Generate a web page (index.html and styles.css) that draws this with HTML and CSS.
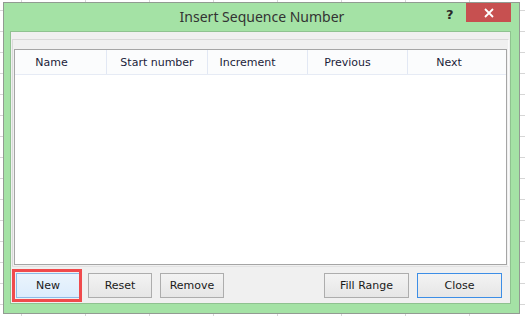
FILE: index.html
```html
<!DOCTYPE html>
<html lang="en">
<head>
  <meta charset="UTF-8">
  <title>Insert Sequence Number</title>
  <link rel="stylesheet" href="styles.css">
</head>
<body>
  <div class="window">
    <div class="titlebar">
      <div class="title">Insert Sequence Number</div>
      <div class="help">?</div>
      <div class="close-x">
        <svg width="10" height="10" viewBox="0 0 10 10">
          <path d="M1 1 L9 9 M9 1 L1 9" stroke="#fff" stroke-width="1.8" fill="none"/>
        </svg>
      </div>
    </div>

    <div class="client">
      <div class="panel">
        <div class="listbox">
          <div class="header">
            <div class="col c1">Name</div>
            <div class="col c2">Start number</div>
            <div class="col c3">Increment</div>
            <div class="col c4">Previous</div>
            <div class="col c5">Next</div>
          </div>
        </div>
      </div>

      <div class="buttons">
        <div class="marked">
          <button class="btn btn-new">New</button>
        </div>
        <button class="btn">Reset</button>
        <button class="btn">Remove</button>
        <div class="spacer"></div>
        <button class="btn wide">Fill Range</button>
        <button class="btn wide btn-default">Close</button>
      </div>
    </div>
  </div>
</body>
</html>
```

FILE: styles.css
```css
body {
  margin: 0;
  width: 525px;
  height: 316px;
  overflow: hidden;
  background-color: #fff;
  background-image:
    repeating-linear-gradient(to right, transparent 0, transparent 21px, #d6d6d6 21px, #d6d6d6 22px, transparent 22px, transparent 64px),
    repeating-linear-gradient(to bottom, transparent 0, transparent 10px, #d6d6d6 10px, #d6d6d6 11px, transparent 11px, transparent 21px);
  font-family: 'DejaVu Sans', Tahoma, sans-serif;
}
.window {
  box-sizing: border-box;
  margin: 2px 0 0 3px;
  width: 517px;
  height: 312px;
  border: 1px solid #929b92;
  background-color: #a4e2a5;
  display: flex;
  flex-direction: column;
}
.titlebar {
  height: 28px;
  display: flex;
  align-items: flex-start;
  padding: 0 8px 0 74px;
}
.title {
  flex: 1;
  text-align: center;
  font-family: 'Noto Sans', 'Open Sans', sans-serif;
  font-size: 14px;
  color: #333;
  line-height: 27px;
}
.help {
  width: 10px;
  margin: 4px 10px 0 0;
  font-family: 'DejaVu Sans', sans-serif;
  font-weight: bold;
  font-size: 13px;
  line-height: 16px;
  color: #2a2a2a;
}
.close-x {
  width: 45px;
  height: 19px;
  background-color: #c75050;
  display: flex;
  align-items: center;
  justify-content: center;
}
.client {
  box-sizing: border-box;
  margin: 0 0 0 6px;
  width: 501px;
  height: 273px;
  border: 1px solid #8fc290;
  background-color: #f0f0f0;
  display: flex;
  flex-direction: column;
}
.panel {
  box-sizing: border-box;
  margin: 7px 1px 0 1px;
  height: 228px;
  padding: 9px 1px 1px 1px;
  border-top: 1px solid #d9d9d9;
  border-left: 1px solid #d9d9d9;
  border-right: 1px solid #fafafa;
  border-bottom: 1px solid #e2e2e2;
}
.listbox {
  height: 216px;
  box-sizing: border-box;
  border: 1px solid #a5a5a5;
  background-color: #fff;
}
.header {
  display: flex;
  height: 25px;
  box-sizing: border-box;
  background-color: #fbfcfd;
  border-bottom: 1px solid #e6ebf5;
}
.col {
  box-sizing: border-box;
  border-right: 1px solid #e2e8f4;
  padding-top: 2px;
  font-size: 11px;
  line-height: 22px;
  color: #1c1c3a;
  text-align: center;
}
.c1 { width: 92px; padding-right: 18px; }
.c2 { width: 101px; }
.c3 { width: 100px; padding-right: 20px; }
.c4 { width: 100px; padding-right: 20px; }
.c5 { flex: 1; border-right: none; padding-right: 16px; }
.buttons {
  display: flex;
  gap: 8px;
  margin-top: 6px;
  padding: 0 8px 0 5px;
}
.spacer {
  flex: 1;
}
.marked {
  position: relative;
}
.marked::after {
  content: "";
  position: absolute;
  left: -4px;
  top: -4px;
  right: -2px;
  bottom: -4px;
  border: 3px solid #f04a4c;
}
.btn {
  box-sizing: border-box;
  width: 64px;
  height: 25px;
  margin: 0;
  padding: 0;
  border: 1px solid #adadad;
  background: linear-gradient(#f3f3f3, #e6e6e6);
  font-family: 'DejaVu Sans', Tahoma, sans-serif;
  font-size: 11px;
  color: #1a1a1a;
}
.btn.wide {
  width: 85px;
}
.btn-new {
  border-color: #8cbbe8;
  background: linear-gradient(#eaf4fc, #dcecfc);
}
.btn-default {
  border-color: #3d8ee6;
}
```
